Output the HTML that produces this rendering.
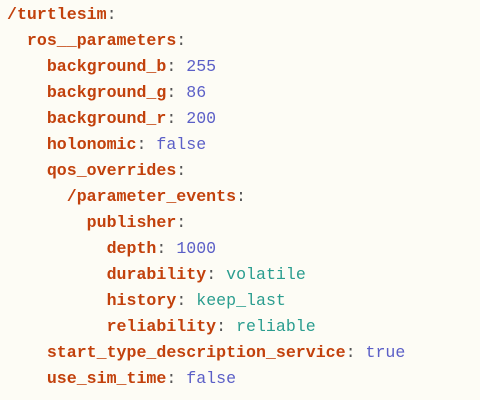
<!DOCTYPE html>
<html><head><style>
html,body{margin:0;padding:0;background:#fdfcf5;width:480px;height:400px;overflow:hidden}
pre{margin:0;padding:2px 0 0 7px;font-family:"Liberation Mono","DejaVu Sans Mono",monospace;font-size:16.6px;line-height:26px;color:#555}
.k{color:#c2410c;font-weight:bold}
.n{color:#5b5fc7}
.s{color:#2a9d8f}
</style></head><body><pre><span class="k">/turtlesim</span>:
  <span class="k">ros__parameters</span>:
    <span class="k">background_b</span>: <span class="n">255</span>
    <span class="k">background_g</span>: <span class="n">86</span>
    <span class="k">background_r</span>: <span class="n">200</span>
    <span class="k">holonomic</span>: <span class="n">false</span>
    <span class="k">qos_overrides</span>:
      <span class="k">/parameter_events</span>:
        <span class="k">publisher</span>:
          <span class="k">depth</span>: <span class="n">1000</span>
          <span class="k">durability</span>: <span class="s">volatile</span>
          <span class="k">history</span>: <span class="s">keep_last</span>
          <span class="k">reliability</span>: <span class="s">reliable</span>
    <span class="k">start_type_description_service</span>: <span class="n">true</span>
    <span class="k">use_sim_time</span>: <span class="n">false</span></pre></body></html>
